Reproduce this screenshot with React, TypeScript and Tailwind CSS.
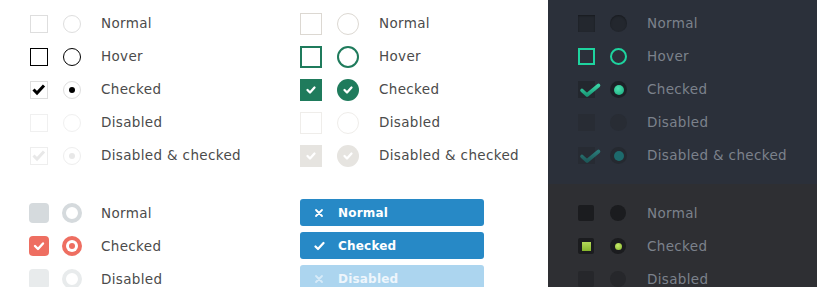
import React from "react";

const font = { fontFamily: '"DejaVu Sans", "Liberation Sans", sans-serif' };

function Row({ children, label, color }: { children: React.ReactNode; label: string; color: string }) {
  return (
    <div className="flex h-[33px] items-center">
      <div className="flex w-[71px] items-center">{children}</div>
      <span className={`text-[13.5px] tracking-[0.35px] ${color}`}>{label}</span>
    </div>
  );
}

function Row1b({ children, label, color }: { children: React.ReactNode; label: string; color: string }) {
  return (
    <div className="flex h-[33px] items-center">
      <div className="flex w-[72px] items-center">{children}</div>
      <span className={`text-[13.5px] tracking-[0.35px] ${color}`}>{label}</span>
    </div>
  );
}

function Row2({ children, label, color }: { children: React.ReactNode; label: string; color: string }) {
  return (
    <div className="flex h-[33px] items-center">
      <div className="flex w-[79px] items-center">{children}</div>
      <span className={`text-[13.5px] tracking-[0.35px] ${color}`}>{label}</span>
    </div>
  );
}

function Row3({ children, label, color }: { children: React.ReactNode; label: string; color: string }) {
  return (
    <div className="flex h-[33px] items-center">
      <div className="flex w-[69px] items-center">{children}</div>
      <span className={`text-[13.5px] tracking-[0.35px] ${color}`}>{label}</span>
    </div>
  );
}

const BlackCheck = ({ color }: { color: string }) => (
  <svg width="18" height="18" viewBox="0 0 18 18" className="absolute -left-px -top-px">
    <path d="M3.5 8.5 L7 12 L14 4.5" fill="none" stroke={color} strokeWidth="3" />
  </svg>
);

const WhiteCheck = ({ color = "#fff" }: { color?: string }) => (
  <svg width="22" height="22" viewBox="0 0 22 22" className="absolute left-0 top-0">
    <path d="M7.5 11 L10 13.5 L14.5 8.5" fill="none" stroke={color} strokeWidth="2.3" strokeLinecap="round" strokeLinejoin="round" />
  </svg>
);

const DarkCheck = ({ dim }: { dim?: boolean }) => (
  <svg width="26" height="20" viewBox="0 0 26 20" className="absolute left-0 top-0 overflow-visible">
    <defs>
      <linearGradient id={dim ? "dg2" : "dg1"} x1="0" y1="0" x2="0" y2="1">
        <stop offset="0" stopColor={dim ? "#2a7a78" : "#38d3a3"} />
        <stop offset="1" stopColor={dim ? "#1d5a5a" : "#1a9a78"} />
      </linearGradient>
    </defs>
    <path d="M4 9.5 L9 14 L20.5 4.5" fill="none" stroke={`url(#${dim ? "dg2" : "dg1"})`} strokeWidth="3.6" strokeLinecap="round" strokeLinejoin="round" />
  </svg>
);

export default function App() {
  const t1 = "text-[#4b4b4b]";
  const t3 = "text-[#7c828c]";
  return (
    <div className="flex h-[287px] w-[817px] overflow-hidden bg-white" style={font}>
      {/* Column 1 */}
      <div className="flex w-[270px] flex-col">
        <div className="pl-[30px] pt-[7px] pb-[12px]">
          <Row label="Normal" color={t1}>
            <div className="h-[18px] w-[18px] border border-[#dedede]" />
            <div className="ml-[15px] h-[18px] w-[18px] rounded-full border border-[#dedede]" />
          </Row>
          <Row label="Hover" color={t1}>
            <div className="h-[18px] w-[18px] border border-black" />
            <div className="ml-[15px] h-[18px] w-[18px] rounded-full border border-black" />
          </Row>
          <Row label="Checked" color={t1}>
            <div className="relative h-[18px] w-[18px] border border-[#dedede]">
              <BlackCheck color="#000" />
            </div>
            <div className="ml-[15px] flex h-[18px] w-[18px] items-center justify-center rounded-full border border-[#dedede]">
              <div className="h-[6px] w-[6px] rounded-full bg-black" />
            </div>
          </Row>
          <Row label="Disabled" color={t1}>
            <div className="h-[18px] w-[18px] border border-[#f0f0f0]" />
            <div className="ml-[15px] h-[18px] w-[18px] rounded-full border border-[#f0f0f0]" />
          </Row>
          <Row label="Disabled & checked" color={t1}>
            <div className="relative h-[18px] w-[18px] border border-[#eeeeee]">
              <BlackCheck color="#e8e8e8" />
            </div>
            <div className="ml-[15px] flex h-[18px] w-[18px] items-center justify-center rounded-full border border-[#eeeeee]">
              <div className="h-[6px] w-[6px] rounded-full bg-[#e8e8e8]" />
            </div>
          </Row>
        </div>
        <div className="pl-[29px] pt-[12.5px]">
          <Row1b label="Normal" color={t1}>
            <div className="h-[20px] w-[20px] rounded-[4px] bg-[#d5dadd]" />
            <div className="ml-[13px] h-[20px] w-[20px] rounded-full border-[4px] border-[#d5dadd]" />
          </Row1b>
          <Row1b label="Checked" color={t1}>
            <div className="relative h-[20px] w-[20px] rounded-[4px] bg-[#ee6e61]">
              <svg width="20" height="20" viewBox="0 0 20 20" className="absolute left-0 top-0">
                <path d="M6 10 L9 13 L14 7.5" fill="none" stroke="#fff" strokeWidth="2.4" strokeLinecap="round" strokeLinejoin="round" />
              </svg>
            </div>
            <div className="ml-[13px] flex h-[20px] w-[20px] items-center justify-center rounded-full bg-[#ee6e61]">
              <div className="flex h-[12px] w-[12px] items-center justify-center rounded-full bg-white">
                <div className="h-[6px] w-[6px] rounded-full bg-[#ee6e61]" />
              </div>
            </div>
          </Row1b>
          <Row1b label="Disabled" color={t1}>
            <div className="h-[20px] w-[20px] rounded-[4px] bg-[#e8ebec]" />
            <div className="ml-[13px] h-[20px] w-[20px] rounded-full border-[4px] border-[#e8ebec]" />
          </Row1b>
        </div>
      </div>

      {/* Column 2 */}
      <div className="flex w-[278px] flex-col">
        <div className="pl-[30px] pt-[7px] pb-[12px]">
          <Row2 label="Normal" color={t1}>
            <div className="h-[22px] w-[22px] border-[1.5px] border-[#dcd8d2]" />
            <div className="ml-[15px] h-[22px] w-[22px] rounded-full border-[1.5px] border-[#dcd8d2]" />
          </Row2>
          <Row2 label="Hover" color={t1}>
            <div className="h-[22px] w-[22px] border-2 border-[#1f7b5c]" />
            <div className="ml-[15px] h-[22px] w-[22px] rounded-full border-2 border-[#1f7b5c]" />
          </Row2>
          <Row2 label="Checked" color={t1}>
            <div className="relative h-[22px] w-[22px] bg-[#1f7b5c]">
              <WhiteCheck />
            </div>
            <div className="relative ml-[15px] h-[22px] w-[22px] rounded-full bg-[#1f7b5c]">
              <WhiteCheck />
            </div>
          </Row2>
          <Row2 label="Disabled" color={t1}>
            <div className="h-[22px] w-[22px] border-[1.5px] border-[#efedea]" />
            <div className="ml-[15px] h-[22px] w-[22px] rounded-full border-[1.5px] border-[#efedea]" />
          </Row2>
          <Row2 label="Disabled & checked" color={t1}>
            <div className="relative h-[22px] w-[22px] bg-[#e6e4e0]">
              <WhiteCheck />
            </div>
            <div className="relative ml-[15px] h-[22px] w-[22px] rounded-full bg-[#e6e4e0]">
              <WhiteCheck />
            </div>
          </Row2>
        </div>
        <div className="flex flex-col gap-[6px] pl-[30px] pt-[15px]">
          <div className="flex h-[27px] w-[184px] items-center rounded-[3px] bg-[#2789c6] text-white">
            <svg width="10" height="10" viewBox="0 0 10 10" className="ml-[14px]">
              <path d="M2 2 L8 8 M8 2 L2 8" stroke="#fff" strokeWidth="1.8" strokeLinecap="round" />
            </svg>
            <span className="ml-[14px] text-[12px] font-bold tracking-[0.2px]">Normal</span>
          </div>
          <div className="flex h-[27px] w-[184px] items-center rounded-[3px] bg-[#2789c6] text-white">
            <svg width="11" height="10" viewBox="0 0 11 10" className="ml-[14px]">
              <path d="M1.5 5.5 L4 8 L9.5 2" fill="none" stroke="#fff" strokeWidth="2.2" strokeLinecap="round" strokeLinejoin="round" />
            </svg>
            <span className="ml-[13px] text-[12px] font-bold tracking-[0.2px]">Checked</span>
          </div>
          <div className="flex h-[27px] w-[184px] items-center rounded-[3px] bg-[#acd5ef] text-white">
            <svg width="10" height="10" viewBox="0 0 10 10" className="ml-[14px]">
              <path d="M2 2 L8 8 M8 2 L2 8" stroke="#d7ebf8" strokeWidth="1.8" strokeLinecap="round" />
            </svg>
            <span className="ml-[14px] text-[12px] font-bold tracking-[0.2px] text-[#eef6fc]">Disabled</span>
          </div>
        </div>
      </div>

      {/* Column 3 */}
      <div className="flex flex-1 flex-col">
        <div className="bg-[#2b303a] pl-[30px] pt-[7px] pb-[12px]">
          <Row3 label="Normal" color={t3}>
            <div className="h-[17px] w-[17px] bg-[#23272e] shadow-[inset_0_1px_2px_rgba(0,0,0,0.35)]" />
            <div className="ml-[15px] h-[17px] w-[17px] rounded-full bg-[#23272e] shadow-[inset_0_1px_2px_rgba(0,0,0,0.35)]" />
          </Row3>
          <Row3 label="Hover" color={t3}>
            <div className="h-[17px] w-[17px] border-2 border-[#1ed49f]" />
            <div className="ml-[15px] h-[17px] w-[17px] rounded-full border-2 border-[#1ed49f]" />
          </Row3>
          <Row3 label="Checked" color={t3}>
            <div className="relative h-[17px] w-[17px] bg-[#23272e]">
              <DarkCheck />
            </div>
            <div className="ml-[15px] flex h-[17px] w-[17px] items-center justify-center rounded-full bg-[#1c2026]">
              <div className="h-[10px] w-[10px] rounded-full bg-[radial-gradient(circle_at_40%_35%,#4ee0b0,#16a77a)]" />
            </div>
          </Row3>
          <Row3 label="Disabled" color={t3}>
            <div className="h-[17px] w-[17px] bg-[#282c34]" />
            <div className="ml-[15px] h-[17px] w-[17px] rounded-full bg-[#282c34]" />
          </Row3>
          <Row3 label="Disabled & checked" color={t3}>
            <div className="relative h-[17px] w-[17px] bg-[#272b33]">
              <DarkCheck dim />
            </div>
            <div className="ml-[15px] flex h-[17px] w-[17px] items-center justify-center rounded-full bg-[#252930]">
              <div className="h-[10px] w-[10px] rounded-full bg-[#1d6a6c]" />
            </div>
          </Row3>
        </div>
        <div className="flex-1 bg-[#2e2f33] pl-[30px] pt-[12.5px]">
          <Row3 label="Normal" color={t3}>
            <div className="h-[16px] w-[16px] rounded-[2px] bg-[#1b1c1f]" />
            <div className="ml-[16px] h-[16px] w-[16px] rounded-full bg-[#1b1c1f]" />
          </Row3>
          <Row3 label="Checked" color={t3}>
            <div className="flex h-[16px] w-[16px] items-center justify-center rounded-[2px] bg-[#1b1c1f]">
              <div className="h-[9px] w-[9px] bg-[linear-gradient(#b4d95a,#86b52c)]" />
            </div>
            <div className="ml-[16px] flex h-[16px] w-[16px] items-center justify-center rounded-full bg-[#1b1c1f]">
              <div className="h-[7px] w-[7px] rounded-full bg-[radial-gradient(circle_at_40%_35%,#c6ea6a,#86b52c)]" />
            </div>
          </Row3>
          <Row3 label="Disabled" color={t3}>
            <div className="h-[16px] w-[16px] rounded-[2px] bg-[#26272b]" />
            <div className="ml-[16px] h-[16px] w-[16px] rounded-full bg-[#26272b]" />
          </Row3>
        </div>
      </div>
    </div>
  );
}
